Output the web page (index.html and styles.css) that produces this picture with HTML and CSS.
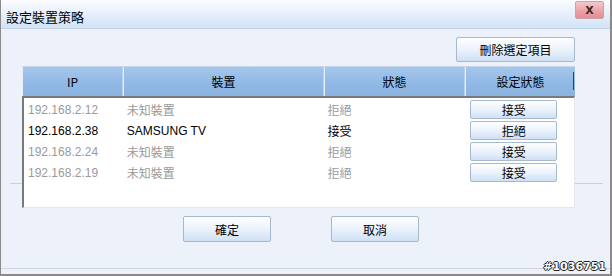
FILE: index.html
```html
<!DOCTYPE html>
<html lang="zh-Hant">
<head>
    <meta charset="UTF-8">
    <title>設定裝置策略</title>
    <link rel="stylesheet" href="styles.css">
</head>
<body>
    <div class="window">
        <div class="titlebar">
            <span class="title">設定裝置策略</span>
            <button class="close" type="button">X</button>
        </div>
        <div class="content">
            <div class="toolbar">
                <button class="btn btn-delete" type="button">刪除選定項目</button>
            </div>
            <div class="grid">
                <div class="grid-head">
                    <div class="col col-ip">IP</div>
                    <div class="col col-dev">裝置</div>
                    <div class="col col-state">狀態</div>
                    <div class="col col-set">設定狀態</div>
                </div>
                <div class="grid-body">
                    <div class="row off">
                        <div class="col col-ip">192.168.2.12</div>
                        <div class="col col-dev">未知裝置</div>
                        <div class="col col-state">拒絕</div>
                        <div class="col col-set"><button class="btn btn-row" type="button">接受</button></div>
                    </div>
                    <div class="row">
                        <div class="col col-ip">192.168.2.38</div>
                        <div class="col col-dev">SAMSUNG TV</div>
                        <div class="col col-state">接受</div>
                        <div class="col col-set"><button class="btn btn-row" type="button">拒絕</button></div>
                    </div>
                    <div class="row off">
                        <div class="col col-ip">192.168.2.24</div>
                        <div class="col col-dev">未知裝置</div>
                        <div class="col col-state">拒絕</div>
                        <div class="col col-set"><button class="btn btn-row" type="button">接受</button></div>
                    </div>
                    <div class="row off">
                        <div class="col col-ip">192.168.2.19</div>
                        <div class="col col-dev">未知裝置</div>
                        <div class="col col-state">拒絕</div>
                        <div class="col col-set"><button class="btn btn-row" type="button">接受</button></div>
                    </div>
                </div>
            </div>
            <div class="actions">
                <button class="btn btn-main" type="button">確定</button>
                <button class="btn btn-main" type="button">取消</button>
            </div>
        </div>
        <div class="stamp">#1036751</div>
    </div>
</body>
</html>
```

FILE: styles.css
```css
body {
    margin: 0;
    font-family: "Liberation Sans", "Noto Sans CJK TC", sans-serif;
    font-size: 12px;
    color: #000;
}
.window {
    position: relative;
    width: 612px;
    height: 276px;
    box-sizing: border-box;
    border-left: 1px solid #8a8a8a;
    border-right: 2px solid #8a8a8a;
    border-bottom: 2px solid #8a8a8a;
    background:
        linear-gradient(#c9d0d9, #c9d0d9) 9px 183px / 593px 1px no-repeat,
        linear-gradient(#d0d6de, #d0d6de) 0 268px / 100% 1px no-repeat,
        #edf2fa;
    overflow: hidden;
}
.titlebar {
    height: 29px;
    box-sizing: border-box;
    display: flex;
    align-items: center;
    justify-content: space-between;
    padding: 0 6px 0 5px;
    background: linear-gradient(#fbfdff, #e4eefb 55%, #d3e3f6);
    border-bottom: 1px solid #c3d3e6;
}
.title {
    font-size: 13px;
    margin-top: 4px;
}
.close {
    align-self: flex-start;
    margin-top: 1px;
    width: 29px;
    height: 18px;
    padding: 0;
    border: 1px solid #c9a3a7;
    border-radius: 2px;
    background: linear-gradient(#f6c9cc, #eaa2a7 55%, #e48e95);
    color: #3a2a2a;
    font-family: "DejaVu Sans", sans-serif;
    font-size: 11px;
    font-weight: bold;
}
.content {
    padding: 8px 0 0 21px;
}
.toolbar {
    display: flex;
    justify-content: flex-end;
    width: 553px;
}
.btn {
    box-sizing: border-box;
    padding: 0;
    border: 1px solid #a5b9cf;
    border-radius: 2px;
    background: linear-gradient(#fdfeff, #eef4fc 45%, #cfe0f6);
    font-family: "Noto Sans CJK TC", sans-serif;
    font-size: 12px;
    color: #000;
}
.btn-delete {
    width: 119px;
    height: 25px;
}
.grid {
    margin-top: 4px;
    width: 553px;
}
.grid-head {
    display: flex;
    height: 29px;
    border-top: 1px solid #c6d6e8;
    background: linear-gradient(#a5c6ec, #90b8e4 60%, #8bb3e0);
}
.grid-head .col {
    display: flex;
    align-items: center;
    justify-content: center;
    font-family: "Noto Sans CJK TC", sans-serif;
    border-left: 1px solid #e6eef8;
    border-right: 1px solid #b9d0ea;
    box-sizing: border-box;
}
.grid-head .col-set {
    border-right: none;
    background: linear-gradient(#1d3f86, #1d3f86) right 1px top 5px / 1px 18px no-repeat;
}
.col-ip { width: 101px; }
.col-dev { width: 201px; }
.col-state { width: 141px; }
.col-set { width: 110px; }
.grid-body {
    height: 112px;
    box-sizing: border-box;
    background: #fff;
    border-top: 2px solid #7a7a7a;
    border-left: 2px solid #7a7a7a;
    border-right: 1px solid #e4e8ee;
    border-bottom: 1px solid #e4e8ee;
    padding-top: 1px;
}
.row {
    display: flex;
    align-items: center;
    height: 21px;
}
.row .col {
    box-sizing: border-box;
    padding-left: 4px;
}
.row .col-ip { width: 99px; }
.row .col-set {
    padding-left: 6px;
}
.off {
    color: #9a9a9a;
}
.btn-row {
    width: 87px;
    height: 19px;
    line-height: 17px;
}
.actions {
    display: flex;
    gap: 60px;
    margin: 8px 0 0 161px;
}
.btn-main {
    width: 88px;
    height: 26px;
}
.stamp {
    position: absolute;
    right: 4px;
    bottom: 1px;
    font-family: "DejaVu Sans", sans-serif;
    font-weight: bold;
    font-size: 11px;
    color: #fff;
    text-shadow: 1px 0 0 #222, -1px 0 0 #222, 0 1px 0 #222, 0 -1px 0 #222;
}
```
